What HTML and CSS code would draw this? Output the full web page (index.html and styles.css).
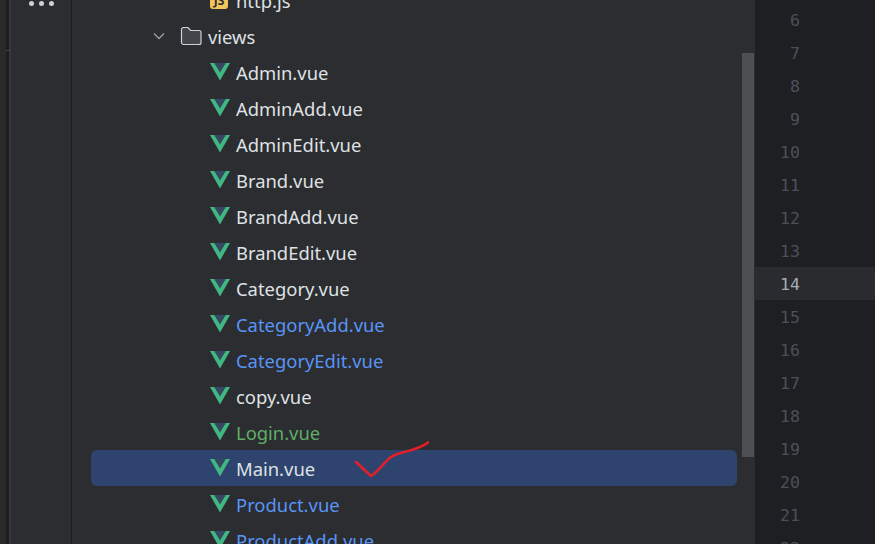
FILE: index.html
```html
<!DOCTYPE html>
<html lang="en">
<head>
<meta charset="utf-8">
<title>Project tree</title>
<link rel="stylesheet" href="styles.css">
</head>
<body>
<svg width="0" height="0" class="defs" aria-hidden="true">
  <defs>
    <symbol id="vue" viewBox="0 0 20 18">
      <path d="M0 0H20L10 17.500Z" fill="#41b883"/>
      <path d="M4.200 0H15.800L10 9.600Z" fill="#35495e"/>
    </symbol>
  </defs>
</svg>
<div class="app">
  <div class="edge"><span class="edge-tick"></span></div>
  <div class="rail">
    <div class="dots"><i></i><i></i><i></i></div>
  </div>
  <div class="panel">
    <ul class="tree">
      <li class="row depth-file"><span class="js-icon">JS</span><span class="name">http.js</span></li>
      <li class="row depth-folder">
        <svg class="chevron" width="14" height="14" viewBox="0 0 14 14"><path d="M2 4.500L7 9.500L12 4.500" fill="none" stroke="#9da0a8" stroke-width="1.300"/></svg>
        <svg class="folder" width="22" height="20" viewBox="0 0 22 20"><path d="M1.500 5V3.500A2 2 0 0 1 3.500 1.500H8L10.500 4.500H19A2 2 0 0 1 21 6.500V16.500A2 2 0 0 1 19 18.500H3.500A2 2 0 0 1 1.500 16.500Z" fill="#43454a" stroke="#ced0d6" stroke-width="1.200"/></svg>
        <span class="name">views</span>
      </li>
      <li class="row depth-file"><svg class="vue"><use href="#vue"/></svg><span class="name">Admin.vue</span></li>
      <li class="row depth-file"><svg class="vue"><use href="#vue"/></svg><span class="name">AdminAdd.vue</span></li>
      <li class="row depth-file"><svg class="vue"><use href="#vue"/></svg><span class="name">AdminEdit.vue</span></li>
      <li class="row depth-file"><svg class="vue"><use href="#vue"/></svg><span class="name">Brand.vue</span></li>
      <li class="row depth-file"><svg class="vue"><use href="#vue"/></svg><span class="name">BrandAdd.vue</span></li>
      <li class="row depth-file"><svg class="vue"><use href="#vue"/></svg><span class="name">BrandEdit.vue</span></li>
      <li class="row depth-file"><svg class="vue"><use href="#vue"/></svg><span class="name">Category.vue</span></li>
      <li class="row depth-file"><svg class="vue"><use href="#vue"/></svg><span class="name modified">CategoryAdd.vue</span></li>
      <li class="row depth-file"><svg class="vue"><use href="#vue"/></svg><span class="name modified">CategoryEdit.vue</span></li>
      <li class="row depth-file"><svg class="vue"><use href="#vue"/></svg><span class="name">copy.vue</span></li>
      <li class="row depth-file"><svg class="vue"><use href="#vue"/></svg><span class="name added">Login.vue</span></li>
      <li class="row depth-file selected"><svg class="vue"><use href="#vue"/></svg><span class="name">Main.vue</span></li>
      <li class="row depth-file"><svg class="vue"><use href="#vue"/></svg><span class="name modified">Product.vue</span></li>
      <li class="row depth-file"><svg class="vue"><use href="#vue"/></svg><span class="name modified">ProductAdd.vue</span></li>
    </ul>
    <svg class="check" width="80" height="44" viewBox="0 0 80 44"><path d="M2 21L17 35C20 34 27 26 31 21.500C35 17 39 14 45 12.500C52 10.500 66 8 74 1.500" fill="none" stroke="#e2202a" stroke-width="2.600" stroke-linecap="round" stroke-linejoin="round"/></svg>
  </div>
  <div class="scroll"><span class="thumb"></span></div>
  <div class="gutter">
    <div class="ln">6</div><div class="ln">7</div><div class="ln">8</div><div class="ln">9</div>
    <div class="ln">10</div><div class="ln">11</div><div class="ln">12</div><div class="ln">13</div>
    <div class="ln current">14</div>
    <div class="ln">15</div><div class="ln">16</div><div class="ln">17</div><div class="ln">18</div>
    <div class="ln">19</div><div class="ln">20</div><div class="ln">21</div><div class="ln">22</div>
  </div>
</div>
</body>
</html>
```

FILE: styles.css
```css
* { box-sizing: border-box; }
html, body { margin: 0; height: 100%; overflow: hidden; background: #2b2d30; }
.defs { position: absolute; }
.app {
  display: flex;
  width: 875px;
  height: 544px;
  overflow: hidden;
  font-family: "Noto Sans", sans-serif;
  font-size: 18.400px;
  color: #dfe1e5;
}
.edge {
  width: 11px;
  flex: none;
  background: linear-gradient(90deg, #2a2a2b 0 6px, #1b1d20 6px 9px, #36383b 9px);
  padding: 50px 0 0 6px;
}
.edge-tick { display: block; height: 1px; background: #44464a; }
.rail {
  width: 61px;
  flex: none;
  border-right: 1px solid #1e1f22;
}
.dots { display: flex; gap: 5px; height: 8px; padding-left: 18px; }
.dots i { width: 5px; height: 5px; margin-top: 0.500px; border-radius: 50%; background: #ced0d6; }
.panel { flex: 1; position: relative; min-width: 0; }
.tree { list-style: none; margin: -18px 0 0; padding: 0 5px 0 19px; }
.row { display: flex; align-items: center; height: 36px; white-space: nowrap; }
.depth-file { padding-left: 119px; }
.depth-folder { padding-left: 61px; }
.vue { width: 20px; height: 18px; flex: none; margin: 0 6px 0 0; }
.modified { color: #5994f7; }
.added { color: #5fad65; }
.selected { background: #2e436e; border-radius: 6px; }
.chevron { margin-right: 14px; flex: none; }
.folder { margin-right: 6px; flex: none; }
.js-icon {
  width: 18px;
  height: 18px;
  margin: 0 8px 0 0;
  flex: none;
  border-radius: 3px;
  background: #f2c55c;
  color: #2b2d30;
  font-size: 12px;
  font-weight: 700;
  line-height: 20px;
  text-align: center;
}
.check { position: absolute; left: 282px; top: 441px; }
.scroll { width: 12px; margin: 0 1px 0 0; flex: none; padding-top: 53px; }
.thumb { display: block; height: 404px; background: #4e4f52; }
.gutter {
  width: 120px;
  flex: none;
  background: #1e1f22;
  padding-top: 3px;
  font-family: "DejaVu Sans Mono", monospace;
  font-size: 16.600px;
  color: #4b5059;
}
.ln { display: flex; justify-content: flex-end; height: 33px; line-height: 33px; padding: 1px 75px 0 0; }
.current { background: #292b2f; color: #a8abb3; }
```
